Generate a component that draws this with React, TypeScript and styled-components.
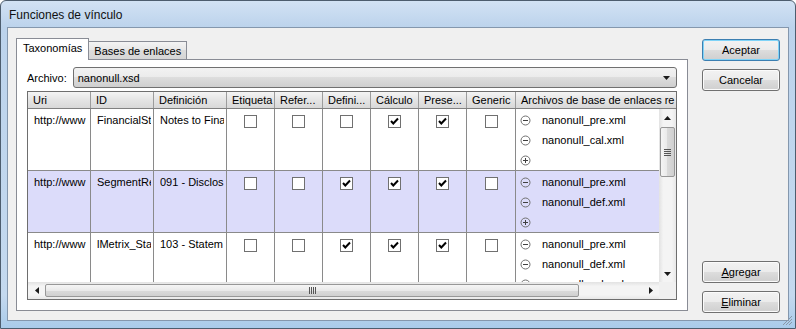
import styled, { createGlobalStyle, css } from "styled-components";

const GlobalStyle = createGlobalStyle`
  html, body { margin: 0; padding: 0; background: #ffffff; }
  body {
    font-family: "Liberation Sans", Arial, sans-serif;
    font-size: 11px;
    color: #000;
  }
  * { box-sizing: border-box; }
`;

const COLS = "63px 63px 73px 48px 48px 48px 48px 48px 49px 1fr";

interface IRow {
  uri: string;
  id: string;
  def: string;
  checks: boolean[];
  files: string[];
  addable: boolean;
}

const rows: IRow[] = [
  {
    uri: "http://www",
    id: "FinancialSt",
    def: "Notes to Fina",
    checks: [false, false, false, true, true, false],
    files: ["nanonull_pre.xml", "nanonull_cal.xml"],
    addable: true,
  },
  {
    uri: "http://www",
    id: "SegmentRe",
    def: "091 - Disclos",
    checks: [false, false, true, true, true, false],
    files: ["nanonull_pre.xml", "nanonull_def.xml"],
    addable: true,
  },
  {
    uri: "http://www",
    id: "lMetrix_Sta",
    def: "103 - Statem",
    checks: [false, false, true, true, true, false],
    files: ["nanonull_pre.xml", "nanonull_def.xml", "nanonull_cal.xml"],
    addable: false,
  },
];

const headers = [
  "Uri",
  "ID",
  "Definición",
  "Etiqueta",
  "Refer...",
  "Defini...",
  "Cálculo",
  "Prese...",
  "Generic",
  "Archivos de base de enlaces re",
];

function Arrow({ dir }: { dir: "up" | "down" | "left" | "right" }) {
  const pts = {
    up: "0,4 7,4 3.5,0",
    down: "0,0 7,0 3.5,4",
    left: "4,0 4,7 0,3.5",
    right: "0,0 0,7 4,3.5",
  }[dir];
  const vertical = dir === "up" || dir === "down";
  return (
    <svg width={vertical ? 7 : 4} height={vertical ? 4 : 7}>
      <polygon points={pts} fill="#1a1a1a" />
    </svg>
  );
}

function CircleIcon({ plus }: { plus?: boolean }) {
  return (
    <svg width="11" height="11" viewBox="0 0 11 11">
      <circle cx="5.5" cy="5.5" r="4.5" fill="none" stroke="#707070" strokeWidth="1" />
      <line x1="3" y1="5.5" x2="8" y2="5.5" stroke="#404040" strokeWidth="1" />
      {plus && <line x1="5.5" y1="3" x2="5.5" y2="8" stroke="#404040" strokeWidth="1" />}
    </svg>
  );
}

function Check({ on }: { on: boolean }) {
  return (
    <CheckBox>
      {on && (
        <svg width="11" height="11" viewBox="0 0 11 11">
          <polyline points="2,5 4.3,7.5 9,2.5" fill="none" stroke="#000" strokeWidth="2" />
        </svg>
      )}
    </CheckBox>
  );
}

function App() {
  return (
    <>
      <GlobalStyle />
      <Window>
        <TitleBar>Funciones de vínculo</TitleBar>
        <Client>
          <LeftCol>
            <TabStrip>
              <Tab $active>Taxonomías</Tab>
              <Tab>Bases de enlaces</Tab>
            </TabStrip>
            <Panel>
              <FileRow>
                <span>Archivo:</span>
                <Combo>
                  <span>nanonull.xsd</span>
                  <Arrow dir="down" />
                </Combo>
              </FileRow>
              <Table>
                <HeaderRow>
                  {headers.map((h) => (
                    <HeaderCell key={h}>{h}</HeaderCell>
                  ))}
                </HeaderRow>
                <BodyWrap>
                  <Body>
                    {rows.map((r, i) => (
                      <Row key={i} $alt={i === 1}>
                        <TextCell><span>{r.uri}</span></TextCell>
                        <TextCell><span>{r.id}</span></TextCell>
                        <TextCell><span>{r.def}</span></TextCell>
                        {r.checks.map((c, j) => (
                          <CheckCell key={j}>
                            <Check on={c} />
                          </CheckCell>
                        ))}
                        <FilesCell>
                          {r.files.map((f, k) => (
                            <FileItem key={k}>
                              <CircleIcon />
                              <span>{f}</span>
                            </FileItem>
                          ))}
                          {r.addable && (
                            <FileItem>
                              <CircleIcon plus />
                            </FileItem>
                          )}
                        </FilesCell>
                      </Row>
                    ))}
                  </Body>
                  <VScroll>
                    <ScrollBtn><Arrow dir="up" /></ScrollBtn>
                    <VTrack>
                      <VThumb>
                        <Grip $vertical />
                      </VThumb>
                    </VTrack>
                    <ScrollBtn><Arrow dir="down" /></ScrollBtn>
                  </VScroll>
                </BodyWrap>
                <HScrollRow>
                  <HScroll>
                    <ScrollBtn><Arrow dir="left" /></ScrollBtn>
                    <HTrack>
                      <HThumb>
                        <Grip />
                      </HThumb>
                    </HTrack>
                    <ScrollBtn><Arrow dir="right" /></ScrollBtn>
                  </HScroll>
                  <Corner />
                </HScrollRow>
              </Table>
            </Panel>
          </LeftCol>
          <RightCol>
            <ButtonGroup>
              <Button $default>Aceptar</Button>
              <Button>Cancelar</Button>
            </ButtonGroup>
            <ButtonGroup>
              <Button><u>A</u>gregar</Button>
              <Button><u>E</u>liminar</Button>
            </ButtonGroup>
          </RightCol>
        </Client>
        <SizeGrip>
          <svg width="11" height="11" viewBox="0 0 11 11">
            <g stroke="#8a98a8" strokeWidth="1">
              <line x1="10" y1="1" x2="1" y2="10" />
              <line x1="10" y1="4" x2="4" y2="10" />
              <line x1="10" y1="7" x2="7" y2="10" />
            </g>
          </svg>
        </SizeGrip>
      </Window>
    </>
  );
}

const Window = styled.div`
  position: relative;
  width: 796px;
  height: 329px;
  display: flex;
  flex-direction: column;
  border: 1px solid #4d5d6e;
  border-radius: 6px 6px 0 0;
  background: linear-gradient(#d2e2f4 0, #bcd3ec 26px, #c4d9ef 90%, #a9cbea 100%);
  padding: 0 6px 7px 6px;
`;

const TitleBar = styled.div`
  height: 26px;
  padding: 2px 0 0 2px;
  line-height: 24px;
  font-size: 12px;
  color: #111;
`;

const Client = styled.div`
  flex: 1;
  display: flex;
  gap: 14px;
  padding: 10px 7px 9px 8px;
  background: #f0f0f0;
  border: 1px solid #8497ad;
`;

const LeftCol = styled.div`
  flex: 0 0 672px;
  display: flex;
  flex-direction: column;
`;

const TabStrip = styled.div`
  height: 21px;
  display: flex;
  align-items: flex-end;
`;

const Tab = styled.div<{ $active?: boolean }>`
  border: 1px solid #898c95;
  border-bottom: none;
  white-space: nowrap;
  ${(p) =>
    p.$active
      ? css`
          position: relative;
          z-index: 1;
          height: 22px;
          margin-bottom: -1px;
          padding: 3px 6px 0 6px;
          background: #fff;
        `
      : css`
          height: 18px;
          border-left: none;
          padding: 3px 5px 0 5px;
          background: linear-gradient(#f3f3f3, #e6e6e6 50%, #dcdcdc 50%, #d6d6d6);
        `}
`;

const Panel = styled.div`
  flex: 1;
  display: flex;
  flex-direction: column;
  gap: 3px;
  padding: 7px 10px 9px 10px;
  background: #fff;
  border: 1px solid #898c95;
`;

const FileRow = styled.div`
  height: 21px;
  display: flex;
  align-items: center;
  gap: 6px;
`;

const Combo = styled.div`
  flex: 1;
  height: 21px;
  display: flex;
  align-items: center;
  justify-content: space-between;
  padding: 0 6px 0 4px;
  border: 1px solid #707070;
  border-radius: 3px;
  background: linear-gradient(#f2f2f2, #ebebeb 50%, #dddddd 50%, #cfcfcf);
`;

const Table = styled.div`
  height: 209px;
  display: flex;
  flex-direction: column;
  border: 1px solid #6e6e6e;
`;

const HeaderRow = styled.div`
  height: 18px;
  display: grid;
  grid-template-columns: ${COLS};
  background: linear-gradient(#f4f4f4, #e4e4e4 50%, #d8d8d8);
  border-bottom: 1px solid #808080;
  overflow: hidden;
`;

const HeaderCell = styled.div`
  padding: 0 0 0 5px;
  line-height: 17px;
  white-space: nowrap;
  overflow: hidden;
  border-right: 1px solid #9c9c9c;
  &:last-child { border-right: none; }
`;

const BodyWrap = styled.div`
  height: 173px;
  display: flex;
`;

const Body = styled.div`
  flex: 1;
  overflow: hidden;
`;

const Row = styled.div<{ $alt?: boolean }>`
  height: 62px;
  display: grid;
  grid-template-columns: ${COLS};
  background: ${(p) => (p.$alt ? "#dcdcfa" : "#fff")};
  border-bottom: 1px solid #8a8a8a;
`;

const Cell = styled.div`
  border-right: 1px solid #8a8a8a;
  min-width: 0;
`;

const TextCell = styled(Cell)`
  padding: 1px 2px 0 6px;
  span {
    display: block;
    line-height: 20px;
    white-space: nowrap;
    overflow: hidden;
  }
`;

const CheckCell = styled(Cell)`
  display: flex;
  justify-content: center;
  padding-top: 6px;
`;

const CheckBox = styled.div`
  width: 13px;
  height: 13px;
  border: 1px solid #707070;
  background: #fff;
  display: flex;
  align-items: center;
  justify-content: center;
`;

const FilesCell = styled(Cell)`
  border-right: none;
  padding: 1px 0 0 4px;
  overflow: hidden;
`;

const FileItem = styled.div`
  height: 20px;
  display: flex;
  align-items: center;
  gap: 11px;
  white-space: nowrap;
`;

const ScrollBtn = styled.div`
  flex: 0 0 17px;
  width: 17px;
  height: 17px;
  display: flex;
  align-items: center;
  justify-content: center;
`;

const VScroll = styled.div`
  width: 17px;
  display: flex;
  flex-direction: column;
  background: linear-gradient(90deg, #e2e2e2, #f4f4f4 25%, #f4f4f4 75%, #e8e8e8);
`;

const VTrack = styled.div`
  flex: 1;
  padding: 1px 1px 0 1px;
`;

const thumbBase = css`
  border: 1px solid #979797;
  border-radius: 2px;
  display: flex;
  align-items: center;
  justify-content: center;
`;

const VThumb = styled.div`
  ${thumbBase}
  height: 50px;
  background: linear-gradient(90deg, #f5f5f5, #e9e9e9 50%, #dadada 50%, #d0d0d0);
`;

const HScrollRow = styled.div`
  flex: 1;
  display: flex;
`;

const HScroll = styled.div`
  flex: 1;
  display: flex;
  align-items: center;
  background: linear-gradient(#e2e2e2, #f4f4f4 25%, #f4f4f4 75%, #e8e8e8);
`;

const HTrack = styled.div`
  flex: 1;
  height: 100%;
  display: flex;
  align-items: center;
`;

const HThumb = styled.div`
  ${thumbBase}
  width: 534px;
  height: 13px;
  background: linear-gradient(#f5f5f5, #e9e9e9 50%, #dadada 50%, #d0d0d0);
`;

const Grip = styled.div<{ $vertical?: boolean }>`
  width: 7px;
  height: 7px;
  background: ${(p) =>
    p.$vertical
      ? "repeating-linear-gradient(#555 0 1px, transparent 1px 2px)"
      : "repeating-linear-gradient(90deg, #555 0 1px, transparent 1px 2px)"};
`;

const Corner = styled.div`
  width: 17px;
  background: #f0f0f0;
`;

const RightCol = styled.div`
  width: 78px;
  display: flex;
  flex-direction: column;
  justify-content: space-between;
  padding-top: 1px;
  margin-bottom: -2px;
`;

const ButtonGroup = styled.div`
  display: flex;
  flex-direction: column;
  gap: 8px;
`;

const Button = styled.div<{ $default?: boolean }>`
  height: 22px;
  display: flex;
  align-items: center;
  justify-content: center;
  border: 1px solid ${(p) => (p.$default ? "#3c7fb1" : "#707070")};
  border-radius: 3px;
  background: linear-gradient(#f2f2f2, #ebebeb 50%, #dddddd 50%, #cfcfcf);
  box-shadow: ${(p) => (p.$default ? "inset 0 0 0 1px #7fd3f7" : "inset 0 0 0 1px #fbfbfb")};
  u { text-decoration: underline; }
`;

const SizeGrip = styled.div`
  position: absolute;
  right: 2px;
  bottom: 2px;
  line-height: 0;
`;

export default App;
